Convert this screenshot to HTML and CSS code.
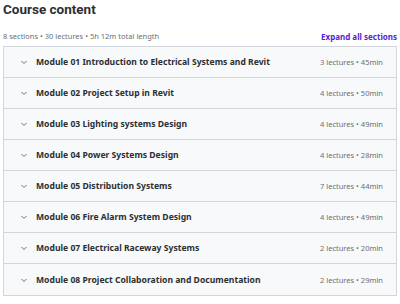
FILE: index.html
```html
<!DOCTYPE html>
<html>
<head>
    <title>Course content</title>
    <link rel="stylesheet" href="styles.css">
</head>
<body>
    <div class="curriculum">
        <h2 class="heading">Course content</h2>
        <div class="summary">
            <span class="stats">8 sections • 30 lectures • 5h 12m total length</span>
            <button class="expand">Expand all sections</button>
        </div>
        <div class="sections">
            <div class="section">
                <span class="chevron"><svg width="8" height="8" viewBox="0 0 8 8"><path d="M1.5 3 L4 5.5 L6.5 3" fill="none" stroke="#6a6f73" stroke-width="1"/></svg></span>
                <span class="title">Module 01 Introduction to Electrical Systems and Revit</span>
                <span class="meta">3 lectures • 45min</span>
            </div>
            <div class="section">
                <span class="chevron"><svg width="8" height="8" viewBox="0 0 8 8"><path d="M1.5 3 L4 5.5 L6.5 3" fill="none" stroke="#6a6f73" stroke-width="1"/></svg></span>
                <span class="title">Module 02 Project Setup in Revit</span>
                <span class="meta">4 lectures • 50min</span>
            </div>
            <div class="section">
                <span class="chevron"><svg width="8" height="8" viewBox="0 0 8 8"><path d="M1.5 3 L4 5.5 L6.5 3" fill="none" stroke="#6a6f73" stroke-width="1"/></svg></span>
                <span class="title">Module 03 Lighting systems Design</span>
                <span class="meta">4 lectures • 49min</span>
            </div>
            <div class="section">
                <span class="chevron"><svg width="8" height="8" viewBox="0 0 8 8"><path d="M1.5 3 L4 5.5 L6.5 3" fill="none" stroke="#6a6f73" stroke-width="1"/></svg></span>
                <span class="title">Module 04 Power Systems Design</span>
                <span class="meta">4 lectures • 28min</span>
            </div>
            <div class="section">
                <span class="chevron"><svg width="8" height="8" viewBox="0 0 8 8"><path d="M1.5 3 L4 5.5 L6.5 3" fill="none" stroke="#6a6f73" stroke-width="1"/></svg></span>
                <span class="title">Module 05 Distribution Systems</span>
                <span class="meta">7 lectures • 44min</span>
            </div>
            <div class="section">
                <span class="chevron"><svg width="8" height="8" viewBox="0 0 8 8"><path d="M1.5 3 L4 5.5 L6.5 3" fill="none" stroke="#6a6f73" stroke-width="1"/></svg></span>
                <span class="title">Module 06 Fire Alarm System Design</span>
                <span class="meta">4 lectures • 49min</span>
            </div>
            <div class="section">
                <span class="chevron"><svg width="8" height="8" viewBox="0 0 8 8"><path d="M1.5 3 L4 5.5 L6.5 3" fill="none" stroke="#6a6f73" stroke-width="1"/></svg></span>
                <span class="title">Module 07 Electrical Raceway Systems</span>
                <span class="meta">2 lectures • 20min</span>
            </div>
            <div class="section">
                <span class="chevron"><svg width="8" height="8" viewBox="0 0 8 8"><path d="M1.5 3 L4 5.5 L6.5 3" fill="none" stroke="#6a6f73" stroke-width="1"/></svg></span>
                <span class="title">Module 08 Project Collaboration and Documentation</span>
                <span class="meta">2 lectures • 29min</span>
            </div>
        </div>
    </div>
</body>
</html>
```

FILE: styles.css
```css
* {
    margin: 0;
    padding: 0;
    box-sizing: border-box;
}

body {
    background: #ffffff;
    font-family: "Noto Sans", Arial, sans-serif;
    color: #2d2f31;
}

.curriculum {
    width: 394px;
    margin-left: 3px;
}

.heading {
    font-family: Roboto, Arial, sans-serif;
    font-size: 13.5px;
    font-weight: 700;
    line-height: 18px;
    height: 26px;
}

.summary {
    display: flex;
    justify-content: space-between;
    align-items: center;
    height: 20px;
}

.stats {
    font-size: 7.5px;
    color: #6a6f73;
}

.expand {
    border: none;
    background: none;
    font-family: inherit;
    font-size: 8px;
    font-weight: 700;
    color: #5624d0;
    cursor: pointer;
}

.sections {
    border: 1px solid #d1d7dc;
}

.section {
    display: flex;
    align-items: center;
    height: 31px;
    padding: 0 13px 0 16px;
    background: #f7f9fa;
    border-bottom: 1px solid #d1d7dc;
}

.section:last-child {
    border-bottom: none;
}

.chevron {
    display: flex;
    width: 16px;
}

.title {
    flex: 1;
    font-size: 8.6px;
    font-weight: 700;
}

.meta {
    font-size: 7.5px;
    color: #6a6f73;
}
```
